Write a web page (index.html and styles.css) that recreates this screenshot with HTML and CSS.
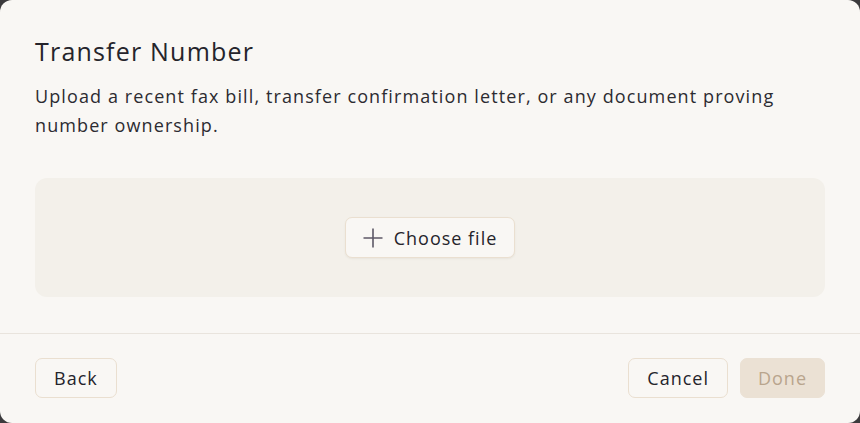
FILE: index.html
```html
<!DOCTYPE html>
<html lang="en">
<head>
<meta charset="utf-8">
<title>Transfer Number</title>
<link rel="stylesheet" href="styles.css">
</head>
<body>
<div class="dialog">
  <div class="body">
    <h1 class="title">Transfer Number</h1>
    <p class="desc">Upload a recent fax bill, transfer confirmation letter, or any document proving number ownership.</p>
    <div class="dropzone">
      <button class="btn choose">
        <svg class="plus" width="22" height="22" viewBox="0 0 22 22" aria-hidden="true"><path d="M11 1.5v19M1.5 11h19" stroke="#5d5866" stroke-width="1.6" fill="none"/></svg>
        <span>Choose file</span>
      </button>
    </div>
  </div>
  <div class="footer">
    <button class="btn back">Back</button>
    <div class="right">
      <button class="btn cancel">Cancel</button>
      <button class="btn done" disabled>Done</button>
    </div>
  </div>
</div>
</body>
</html>
```

FILE: styles.css
```css
* { box-sizing: border-box; }
html, body { margin: 0; height: 100%; }
body {
  background: #3b3a3c;
  font-family: "Open Sans", "Liberation Sans", sans-serif;
  color: #25242b;
}
.dialog {
  height: 423px;
  width: 860px;
  background: #f9f7f4;
  border-radius: 12px;
  display: flex;
  flex-direction: column;
}
.body {
  padding: 34px 35px 36px;
  border-bottom: 1px solid #e9e4dd;
}
.title {
  margin: 0;
  font-size: 25px;
  font-weight: 500;
  line-height: 34px;
  letter-spacing: 1.2px;
}
.desc {
  margin: 14px 0 0;
  font-size: 18px;
  line-height: 29px;
  letter-spacing: 1.1px;
  color: #2c2b31;
}
.dropzone {
  margin-top: 38px;
  height: 119px;
  background: #f3f0ea;
  border-radius: 12px;
  display: flex;
  align-items: center;
  justify-content: center;
}
.btn {
  font-family: inherit;
  font-size: 18px;
  letter-spacing: 1px;
  color: #25242b;
  background: #f9f7f4;
  border: 1px solid #eadfd0;
  border-radius: 7px;
  height: 40px;
  padding: 0 17px;
  display: inline-flex;
  align-items: center;
}
.back { padding: 0 18px; }
.cancel { padding: 0 18px; }
.choose {
  height: 41px;
  padding: 0 17px 0 16px;
  gap: 10px;
  box-shadow: 0 1px 2px rgba(120, 100, 70, 0.08);
}
.footer {
  padding: 24px 35px;
  display: flex;
  justify-content: space-between;
  align-items: center;
}
.right { display: flex; gap: 12px; }
.done {
  background: #ebe1d4;
  border-color: #ebe1d4;
  color: #b9a58d;
  padding: 0 17px;
}
```
